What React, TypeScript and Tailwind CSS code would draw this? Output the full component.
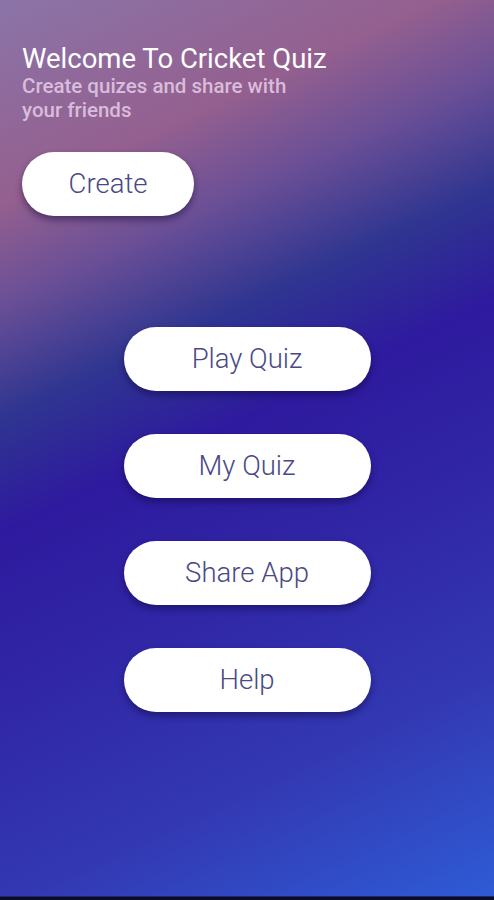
import React from "react";

const Btn = ({ label, className }: { label: string; className: string }) => (
  <button
    className={`flex items-center justify-center rounded-full bg-white text-[27.5px] font-light text-[#4a4986] shadow-[0_4px_7px_rgba(10,5,50,0.45)] ${className}`}
    style={{ fontFamily: "Roboto, 'Noto Sans', sans-serif" }}
  >
    {label}
  </button>
);

export default function App() {
  return (
    <div
      className="flex h-[900px] w-[494px] flex-col overflow-hidden bg-[linear-gradient(155deg,#8b74a8_0%,#94608f_18%,#6a4f96_27%,#2f3590_37%,#2e1a9e_47%,#3026a6_62%,#3338b2_80%,#2e5cd6_100%)]"
      style={{ fontFamily: "Roboto, 'Noto Sans', sans-serif" }}
    >
      <div className="flex flex-1 flex-col">
        <div className="pl-[22px] pt-[44px]">
          <h1 className="text-[27.5px] font-normal leading-[30px] text-white">
            Welcome To Cricket Quiz
          </h1>
          <p className="w-[296px] text-[20.5px] font-medium leading-[24px] text-[#e7cde8]/85">
            Create quizes and share with your friends
          </p>
          <Btn label="Create" className="mt-[30px] h-[64px] w-[172px]" />
        </div>
        <div className="mt-[111px] flex flex-col items-center gap-[43px]">
          <Btn label="Play Quiz" className="h-[64px] w-[247px]" />
          <Btn label="My Quiz" className="h-[64px] w-[247px]" />
          <Btn label="Share App" className="h-[64px] w-[247px]" />
          <Btn label="Help" className="h-[64px] w-[247px]" />
        </div>
      </div>
      <div className="h-px bg-[#1c2474]" />
      <div className="h-[3px] bg-[#0b0b22]" />
    </div>
  );
}
